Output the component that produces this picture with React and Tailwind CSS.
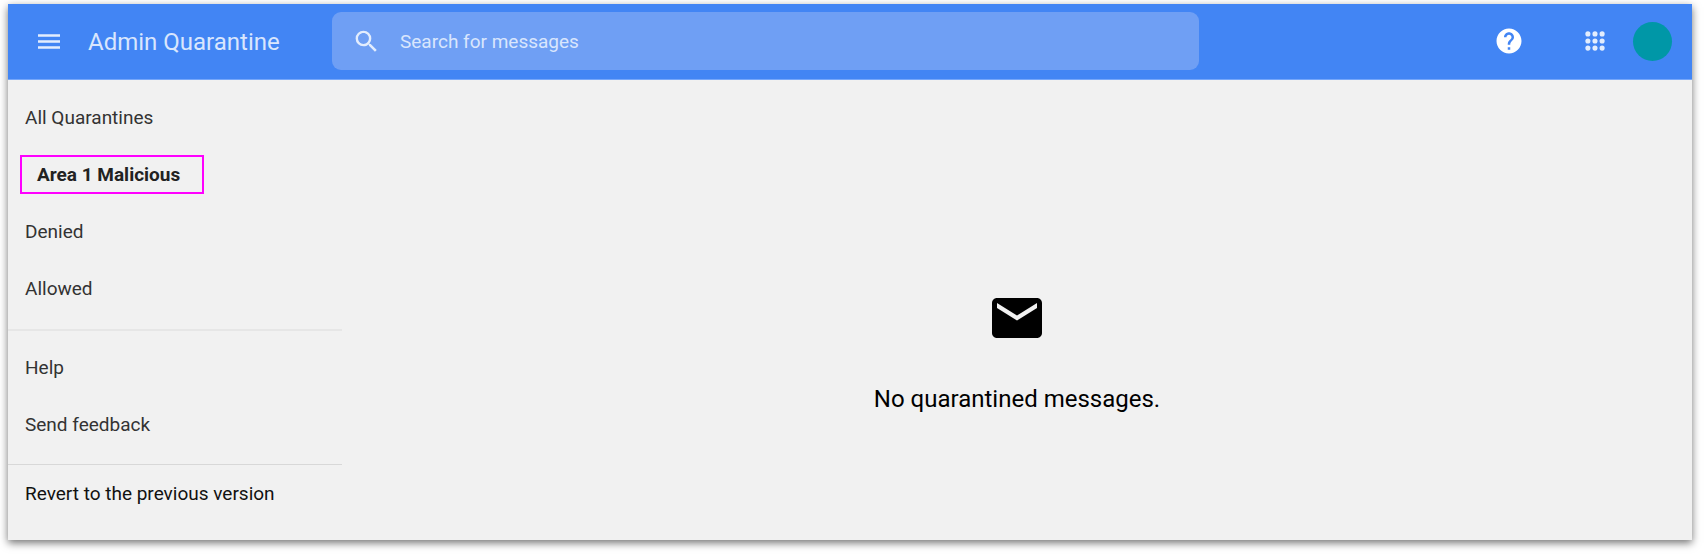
import React from "react";
import { MdEmail, MdHelp, MdSearch } from "react-icons/md";

const quarantines = ["All Quarantines", "Area 1 Malicious", "Denied", "Allowed"];
const support = ["Help", "Send feedback"];
const dots = [5.9, 12, 18.1];

function MenuIcon() {
  return (
    <svg width="30" height="30" viewBox="0 0 30 30" fill="currentColor" aria-hidden="true">
      <path d="M4 8.2h22v2.6H4zM4 14.2h22v2.6H4zM4 20.2h22v2.6H4z" />
    </svg>
  );
}

function AppsIcon() {
  return (
    <svg width="28" height="28" viewBox="0 0 24 24" fill="currentColor" aria-hidden="true">
      {dots.map((y) => dots.map((x) => <circle key={`${x}-${y}`} cx={x} cy={y} r="2.2" />))}
    </svg>
  );
}

function NavItem({ label, active }) {
  return (
    <li className="flex h-[57px] items-center">
      {active ? (
        <a
          href="#"
          aria-current="page"
          className="ml-3 flex h-[39px] items-center border-2 border-[#ff00ff] pr-[22px] pl-[15px] font-bold text-[#222222]"
        >
          {label}
        </a>
      ) : (
        <a href="#" className="pl-[17px]">
          {label}
        </a>
      )}
    </li>
  );
}

function Header() {
  return (
    <header className="flex h-[76px] items-center border-b border-[#76a7fa] bg-[#4285f4] pr-5 pb-px pl-[26px] text-[#e3edfd]">
      <button type="button" aria-label="Main menu" className="shrink-0">
        <MenuIcon />
      </button>
      <h1 className="w-[268px] shrink-0 pt-0.5 pl-6 text-2xl whitespace-nowrap text-[#d9e6fd]">
        Admin Quarantine
      </h1>
      <label className="flex h-[58px] max-w-[867px] flex-1 items-center rounded-[9px] bg-[#6f9ff4] pl-5">
        <MdSearch size={29} className="shrink-0" />
        <input
          type="search"
          aria-label="Search for messages"
          placeholder="Search for messages"
          className="h-full min-w-0 flex-1 bg-transparent pl-[19px] text-[19px] outline-none placeholder:text-[#d9e6fd]"
        />
      </label>
      <div className="ml-auto flex items-center">
        <button type="button" aria-label="Help" className="mr-[57px] text-white">
          <MdHelp size={30} />
        </button>
        <button type="button" aria-label="Google apps" className="mr-6">
          <AppsIcon />
        </button>
        <button
          type="button"
          aria-label="Account"
          className="size-[39px] rounded-full bg-[#0097a7]"
        />
      </div>
    </header>
  );
}

export default function App() {
  return (
    <div className="flex min-h-screen flex-col bg-white pt-1 pr-[13px] pb-[14px] pl-2 font-[Roboto,sans-serif]">
      <div className="flex flex-1 flex-col bg-[#f1f1f1] shadow-[0_3px_8px_0_rgba(0,0,0,0.55)]">
        <Header />
        <div className="flex flex-1">
          <nav className="w-[334px] shrink-0 pt-[9px] text-[19px] leading-6 text-[#333333]">
            <ul className="border-b-2 border-[#e6e6e6] pb-3">
              {quarantines.map((label) => (
                <NavItem key={label} label={label} active={label === "Area 1 Malicious"} />
              ))}
            </ul>
            <ul className="border-b border-[#d8d8d8] pt-2 pb-[11px]">
              {support.map((label) => (
                <NavItem key={label} label={label} />
              ))}
            </ul>
            <a href="#" className="block pt-[17px] pl-[17px] text-[#111111]">
              Revert to the previous version
            </a>
          </nav>
          <main className="flex flex-1 flex-col items-center justify-center pt-[82px] text-black">
            <MdEmail size={60} />
            <p className="pt-[35px] text-2xl">No quarantined messages.</p>
          </main>
        </div>
      </div>
    </div>
  );
}
